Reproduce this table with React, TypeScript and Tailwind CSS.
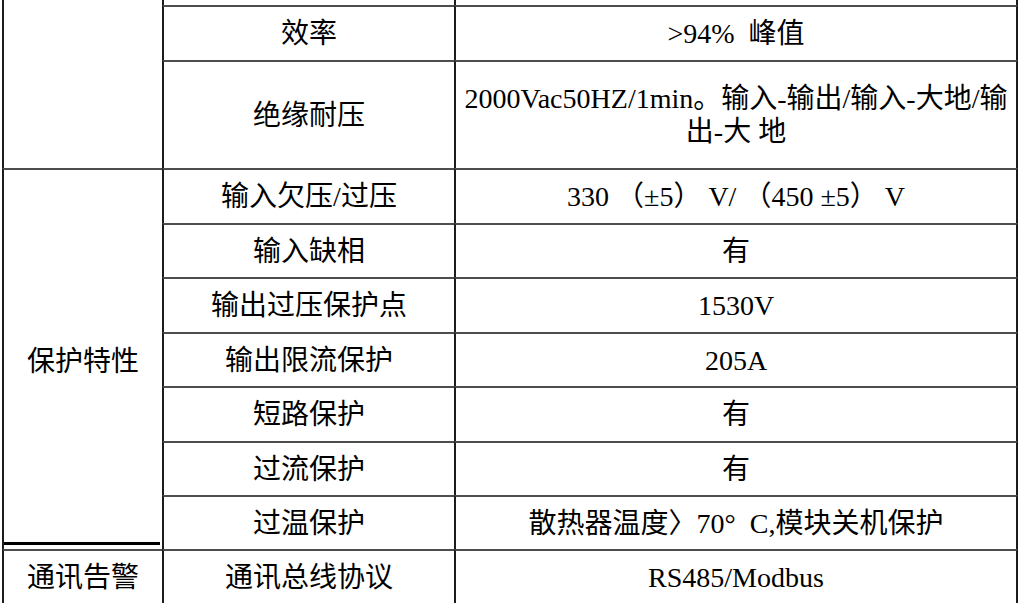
import React from "react";

const font = {
  fontFamily: '"Liberation Serif", "Noto Sans CJK SC", serif',
};

const cellBase =
  "flex items-center justify-center text-center text-[28px] leading-[33px] text-black border-l-2 border-l-[#1c1c1c]";
const top = "border-t-2 border-t-[#4d4d4d]";

function Pair({ a, b }: { a: React.ReactNode; b: React.ReactNode }) {
  return (
    <>
      <div className={`${cellBase} ${top}`}>{a}</div>
      <div className={`${cellBase} ${top} border-r-2 border-r-[#1c1c1c]`}>{b}</div>
    </>
  );
}

export default function App() {
  return (
    <div className="w-[1025px] h-[609px] bg-white overflow-hidden pl-[2px]" style={font}>
      <div className="grid grid-cols-[160px_292px_564px] grid-rows-[5px_55px_108px_55px_54px_55px_54px_55px_54px_54px_54px]">
        {/* col1 top spanning empty cell */}
        <div className="row-span-3 border-l-2 border-l-[#1c1c1c]" />
        <div className="border-l-2 border-l-[#1c1c1c]" />
        <div className="border-l-2 border-l-[#1c1c1c] border-r-2 border-r-[#1c1c1c]" />

        <Pair a="效率" b={<span>&gt;94%&nbsp; 峰值</span>} />
        <Pair
          a="绝缘耐压"
          b={
            <span>
              2000Vac50HZ/1min。输入-输出/输入-大地/输
              <br />
              出-大 地
            </span>
          }
        />

        {/* 保护特性 */}
        <div className={`row-span-7 col-start-1 row-start-4 flex flex-col border-l-2 border-l-[#1c1c1c] ${top}`}>
          <div className="flex-1 flex items-center justify-center text-[28px] text-black pt-[12px]">保护特性</div>
          <div className="h-[3px] bg-black mr-[2px] mb-[4px]" />
        </div>
        <div className={`${cellBase} ${top} col-start-2 row-start-4`}>输入欠压/过压</div>
        <div className={`${cellBase} ${top} border-r-2 border-r-[#1c1c1c] col-start-3 row-start-4`}>
          330 （±5） V/ （450 ±5） V
        </div>
        <div className={`${cellBase} ${top} col-start-2`}>输入缺相</div>
        <div className={`${cellBase} ${top} border-r-2 border-r-[#1c1c1c] col-start-3`}>有</div>
        <div className={`${cellBase} ${top} col-start-2`}>输出过压保护点</div>
        <div className={`${cellBase} ${top} border-r-2 border-r-[#1c1c1c] col-start-3`}>1530V</div>
        <div className={`${cellBase} ${top} col-start-2`}>输出限流保护</div>
        <div className={`${cellBase} ${top} border-r-2 border-r-[#1c1c1c] col-start-3`}>205A</div>
        <div className={`${cellBase} ${top} col-start-2`}>短路保护</div>
        <div className={`${cellBase} ${top} border-r-2 border-r-[#1c1c1c] col-start-3`}>有</div>
        <div className={`${cellBase} ${top} col-start-2`}>过流保护</div>
        <div className={`${cellBase} ${top} border-r-2 border-r-[#1c1c1c] col-start-3`}>有</div>
        <div className={`${cellBase} ${top} col-start-2`}>过温保护</div>
        <div className={`${cellBase} ${top} border-r-2 border-r-[#1c1c1c] col-start-3`}>
          散热器温度〉70°&nbsp; C,模块关机保护
        </div>

        {/* 通讯告警 */}
        <div className={`${cellBase} ${top} col-start-1`}>通讯告警</div>
        <div className={`${cellBase} ${top} col-start-2`}>通讯总线协议</div>
        <div className={`${cellBase} ${top} border-r-2 border-r-[#1c1c1c] col-start-3`}>RS485/Modbus</div>
      </div>
    </div>
  );
}
